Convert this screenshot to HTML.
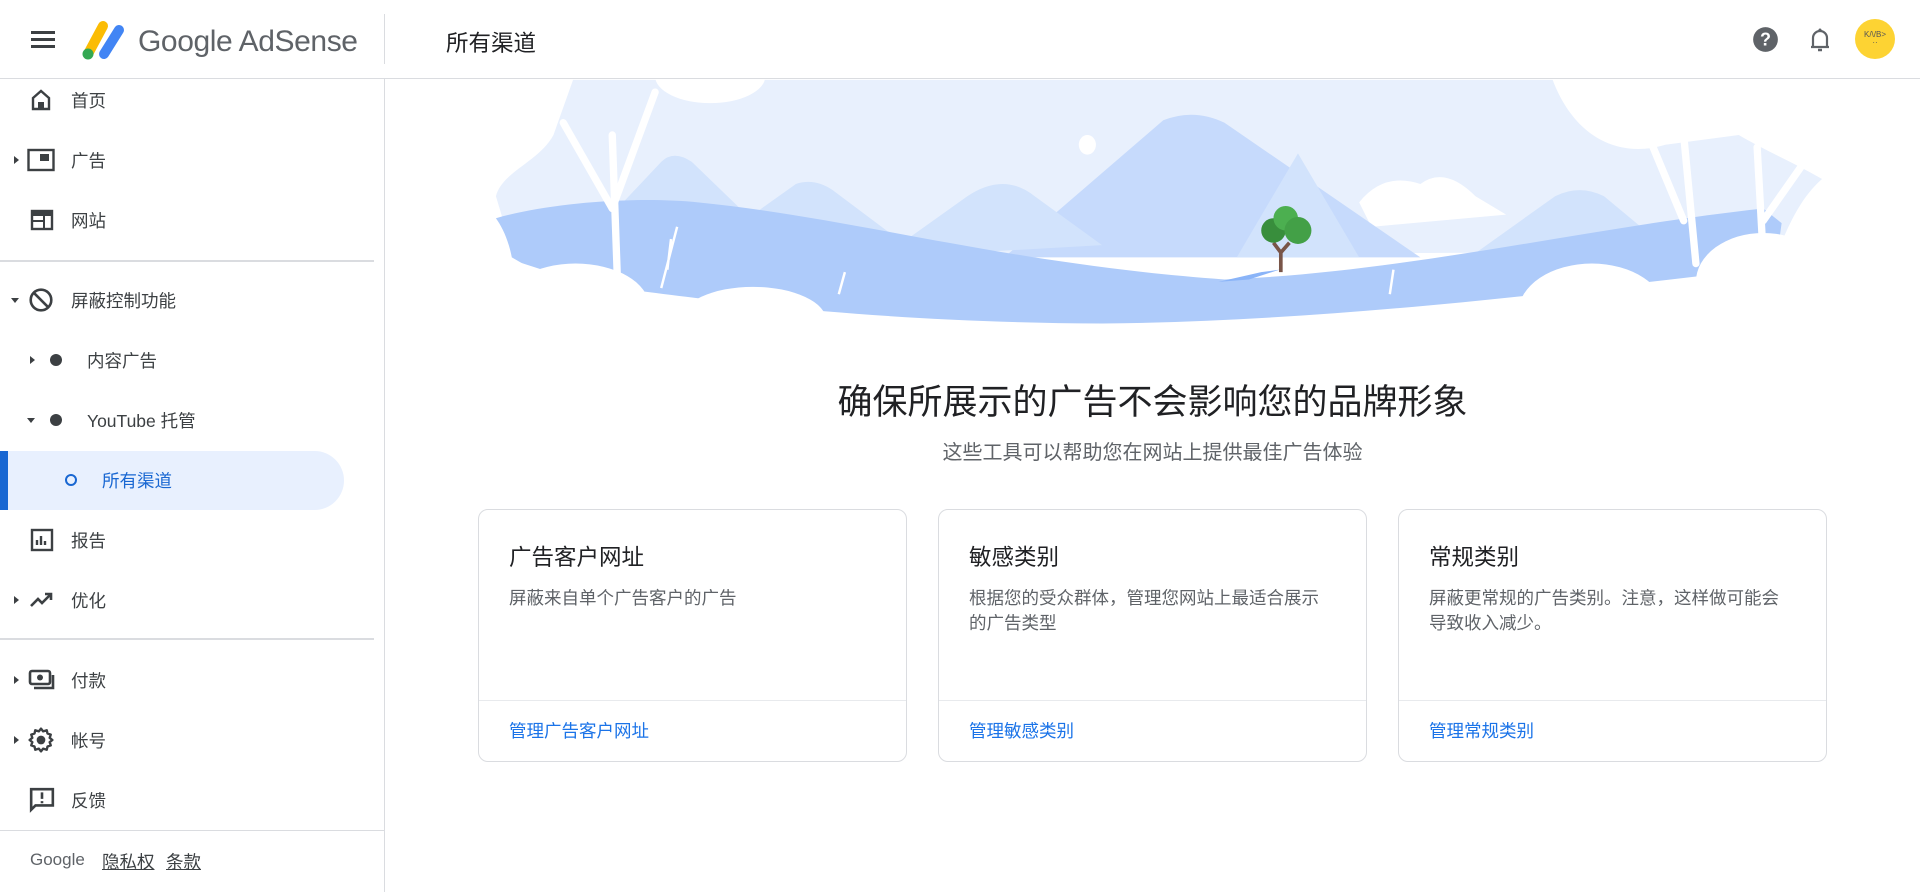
<!DOCTYPE html>
<html><head><meta charset="utf-8"><style>
*{margin:0;padding:0;box-sizing:border-box}
body{width:1920px;height:892px;overflow:hidden;background:#fff;font-family:"Liberation Sans","Noto Sans CJK SC",sans-serif;color:#3c4043;position:relative}
.hdr{position:absolute;left:0;top:0;width:1920px;height:79px;border-bottom:1px solid #dadce0;background:#fff}
.vline{position:absolute;left:384px;top:14px;width:1px;height:50px;background:#dadce0}
.side{position:absolute;left:384px;top:79px;width:1px;height:813px;background:#dadce0}
.item{position:absolute;left:0;height:40px;font-size:17.5px;color:#3c4043;display:flex;align-items:center}
.item .t{position:absolute;left:71px;white-space:nowrap}
.arr{position:absolute;width:0;height:0}
.arr.r{border-top:4px solid transparent;border-bottom:4px solid transparent;border-left:5px solid #3c4043}
.arr.d{border-left:4px solid transparent;border-right:4px solid transparent;border-top:5px solid #3c4043}
.hr{position:absolute;left:0;height:2px;background:#dadce0}
.card{position:absolute;top:509px;width:429px;height:253px;border:1px solid #dadce0;border-radius:10px;background:#fff}
.card h3{position:absolute;left:30px;top:30px;font-size:22.5px;font-weight:normal;color:#202124}
.card p{position:absolute;left:30px;top:76px;font-size:17.5px;line-height:24.5px;color:#5f6368}
.card .dv{position:absolute;left:0;right:0;top:190px;height:1px;background:#e8eaed}
.card a{position:absolute;left:30px;top:208px;font-size:17.5px;color:#1a73e8;text-decoration:none}
</style></head><body>
<svg style="position:absolute;left:0;top:0" width="1920" height="892" viewBox="0 0 1568 728">
<path d="M405,160 C410,140 440,132 452,110 L468,65 L1268,65 C1285,110 1320,130 1360,118 L1420,110 C1440,122 1470,135 1488,146 C1472,160 1462,180 1452,205 L420,210 Z" fill="#e8f0fd"/>
<ellipse cx="580" cy="62" rx="45" ry="22" fill="#fff"/>
<ellipse cx="888" cy="118" rx="7" ry="8" fill="#fff"/>
<path d="M490,185 L540,132 Q550,122 565,132 L620,185 Z" fill="#d2e3fc"/>
<path d="M580,200 L650,150 Q665,145 680,155 L740,200 Z" fill="#d2e3fc"/>
<path d="M1110,165 Q1130,140 1160,150 Q1180,135 1205,160 L1230,175 L1120,185 Z" fill="#fff"/>
<path d="M820,210 L950,98 Q975,88 1000,100 L1160,210 Z" fill="#c6dafc"/>
<path d="M720,210 L790,160 Q820,140 845,160 L900,200 Z" fill="#d2e3fc"/>
<path d="M1010,210 L1060,125 L1110,210 Z" fill="#d2e3fc"/>
<path d="M1200,210 L1270,160 Q1290,150 1310,160 L1370,210 Z" fill="#d2e3fc"/>
<path d="M405,178 C450,165 520,160 570,165 C700,178 820,215 1000,228 C1150,222 1300,185 1440,170 L1455,182 L1450,218 C1300,235 1100,262 900,264 C700,263 560,242 480,232 L418,212 C410,200 408,190 405,178 Z" fill="#aecbfa"/>
<path d="M418,210 C415,195 410,185 405,178 L405,240 L470,240 Z" fill="#fff"/>
<ellipse cx="470" cy="250" rx="60" ry="35" fill="#fff"/>
<ellipse cx="615" cy="262" rx="60" ry="28" fill="#fff"/>
<ellipse cx="1300" cy="255" rx="60" ry="40" fill="#fff"/>
<ellipse cx="1440" cy="230" rx="55" ry="40" fill="#fff"/>
<g stroke="#fff" stroke-width="6" stroke-linecap="round">
<line x1="505" y1="250" x2="500" y2="110"/><line x1="500" y1="170" x2="535" y2="75"/><line x1="500" y1="170" x2="460" y2="100"/>
<line x1="1385" y1="215" x2="1375" y2="110"/><line x1="1440" y1="210" x2="1435" y2="120"/><line x1="1440" y1="180" x2="1475" y2="130"/><line x1="1375" y1="180" x2="1350" y2="120"/>
</g>
<g stroke="#fff" stroke-width="2" fill="none"><path d="M540,235 L553,185 M545,220 L548,195"/><path d="M685,240 L690,222"/><path d="M1135,240 L1138,220"/></g>
<path d="M995,230 L1030,222 L1045,220 L1020,228 Z" fill="#8ab4f8"/>
<path d="M1046,222 L1046,206 L1040,198 M1046,206 L1053,198" stroke="#795548" stroke-width="3" fill="none"/>
<circle cx="1040" cy="188" r="10" fill="#388e3c"/><circle cx="1050" cy="178" r="10" fill="#4caf50"/><circle cx="1060" cy="188" r="11" fill="#43a047"/>
</svg>
<div class="hdr">
<div style="position:absolute;left:31px;top:31px;width:24px;height:3px;background:#3c4043;box-shadow:0 7px 0 #3c4043,0 14px 0 #3c4043"></div>
<svg style="position:absolute;left:80px;top:18px" width="48" height="44" viewBox="0 0 48 44"><line x1="8" y1="36" x2="23" y2="8" stroke="#fbbc04" stroke-width="10" stroke-linecap="round"/><line x1="24" y1="36" x2="39" y2="12" stroke="#4285f4" stroke-width="10" stroke-linecap="round"/><circle cx="8" cy="36" r="5.5" fill="#34a853"/></svg>
<div style="position:absolute;left:138px;top:25px;font-size:30px;color:#5f6368;letter-spacing:-0.4px">Google AdSense</div>
<div class="vline"></div>
<div style="position:absolute;left:446px;top:26px;font-size:22.5px;color:#202124">所有渠道</div>
<svg style="position:absolute;left:1752px;top:26px" width="27" height="27" viewBox="0 0 24 24"><circle cx="12" cy="12" r="11" fill="#5f6368"/><text x="12" y="17.5" font-size="16" font-weight="bold" text-anchor="middle" fill="#fff" font-family="Liberation Sans">?</text></svg>
<svg style="position:absolute;left:1808px;top:26px" width="24" height="28" viewBox="0 0 24 28"><path d="M5,21 L5,12 A7,7 0 0 1 19,12 L19,21 Z M3,21 L21,21" stroke="#5f6368" stroke-width="2.2" fill="none"/><path d="M10,24 L14,24" stroke="#5f6368" stroke-width="2.5"/><circle cx="12" cy="4" r="1.5" fill="#5f6368"/></svg>
<div style="position:absolute;left:1855px;top:19px;width:40px;height:40px;border-radius:50%;background:#fdd333;font-size:8px;color:#555;text-align:center;padding-top:12px;line-height:8px">K/\/B&gt;<br>··</div>
</div>
<div class="side"></div>
<div class="item" style="top:80px"><svg style="position:absolute;left:29px" width="24" height="24" viewBox="0 0 24 24"><path d="M4,21 L4,10 L12,3 L20,10 L20,21 Z" fill="none" stroke="#3c4043" stroke-width="2.4"/><rect x="9" y="14" width="6" height="7" fill="#3c4043"/></svg><span class="t">首页</span></div>
<div class="item" style="top:140px"><span class="arr r" style="left:14px"></span><svg style="position:absolute;left:27px" width="28" height="24" viewBox="0 0 28 24"><rect x="1.5" y="2" width="25" height="20" fill="none" stroke="#3c4043" stroke-width="2.4"/><rect x="13" y="6" width="9" height="7" fill="#3c4043"/></svg><span class="t">广告</span></div>
<div class="item" style="top:200px"><svg style="position:absolute;left:30px" width="24" height="24" viewBox="0 0 24 24"><rect x="2" y="3" width="20" height="18" fill="none" stroke="#3c4043" stroke-width="2.4"/><rect x="2" y="3" width="20" height="5" fill="#3c4043"/><path d="M2,13 H14 M14,8 V21" stroke="#3c4043" stroke-width="2"/></svg><span class="t">网站</span></div>
<div class="hr" style="top:260px;width:374px"></div>
<div class="item" style="top:280px"><span class="arr d" style="left:11px"></span><svg style="position:absolute;left:28px" width="26" height="26" viewBox="0 0 24 24"><circle cx="12" cy="12" r="9.5" fill="none" stroke="#3c4043" stroke-width="2.4"/><line x1="5.5" y1="5.5" x2="18.5" y2="18.5" stroke="#3c4043" stroke-width="2.4"/></svg><span class="t">屏蔽控制功能</span></div>
<div class="item" style="top:340px"><span class="arr r" style="left:30px"></span><span style="position:absolute;left:50px;width:12px;height:12px;border-radius:50%;background:#3c4043"></span><span class="t" style="left:87px">内容广告</span></div>
<div class="item" style="top:400px"><span class="arr d" style="left:27px"></span><span style="position:absolute;left:50px;width:12px;height:12px;border-radius:50%;background:#3c4043"></span><span class="t" style="left:87px">YouTube 托管</span></div>
<div style="position:absolute;left:0;top:451px;width:344px;height:59px;background:#e8f0fe;border-radius:0 30px 30px 0"></div>
<div style="position:absolute;left:0;top:451px;width:8px;height:59px;background:#1967d2"></div>
<div class="item" style="top:460px"><span style="position:absolute;left:65px;width:12px;height:12px;border-radius:50%;border:2.5px solid #1967d2"></span><span class="t" style="left:102px;color:#1967d2">所有渠道</span></div>
<div class="item" style="top:520px"><svg style="position:absolute;left:30px" width="24" height="24" viewBox="0 0 24 24"><rect x="2" y="2" width="20" height="20" fill="none" stroke="#3c4043" stroke-width="2.4"/><path d="M7,17 V12 M11,17 V8 M15,17 V13" stroke="#3c4043" stroke-width="2.4"/></svg><span class="t">报告</span></div>
<div class="item" style="top:580px"><span class="arr r" style="left:14px"></span><svg style="position:absolute;left:29px" width="26" height="20" viewBox="0 0 26 20"><path d="M2,16 L9,9 L13,13 L22,4 M16,4 H22 V10" fill="none" stroke="#3c4043" stroke-width="2.6"/></svg><span class="t">优化</span></div>
<div class="hr" style="top:638px;width:374px"></div>
<div class="item" style="top:660px"><span class="arr r" style="left:14px"></span><svg style="position:absolute;left:28px" width="28" height="22" viewBox="0 0 28 22"><rect x="2" y="2" width="20" height="13" rx="2" fill="none" stroke="#3c4043" stroke-width="2.6"/><circle cx="12" cy="8.5" r="3" fill="#3c4043"/><path d="M25,6 V19 H6" fill="none" stroke="#3c4043" stroke-width="2.6"/></svg><span class="t">付款</span></div>
<div class="item" style="top:720px"><span class="arr r" style="left:14px"></span><svg style="position:absolute;left:28px" width="26" height="26" viewBox="0 0 24 24"><path d="M12,1.5 L14,4 L17.3,3 L18,6 L21,7 L20,10 L22.5,12 L20,14 L21,17 L18,18 L17.3,21 L14,20 L12,22.5 L10,20 L6.7,21 L6,18 L3,17 L4,14 L1.5,12 L4,10 L3,7 L6,6 L6.7,3 L10,4 Z" fill="none" stroke="#3c4043" stroke-width="2.2" stroke-linejoin="round"/><circle cx="12" cy="12" r="4" fill="#3c4043"/></svg><span class="t">帐号</span></div>
<div class="item" style="top:780px"><svg style="position:absolute;left:29px" width="26" height="26" viewBox="0 0 24 24"><path d="M2,2 H22 V17 H6 L2,21 Z" fill="none" stroke="#3c4043" stroke-width="2.4"/><path d="M12,5 V11 M12,13 V15" stroke="#3c4043" stroke-width="2.4"/></svg><span class="t">反馈</span></div>
<div class="hr" style="top:830px;width:384px;height:1px"></div>
<div style="position:absolute;left:30px;top:850px;font-size:17px;color:#5f6368">Google</div>
<div style="position:absolute;left:102px;top:849px;font-size:17.5px;color:#3c4043;text-decoration:underline">隐私权</div>
<div style="position:absolute;left:166px;top:849px;font-size:17.5px;color:#3c4043;text-decoration:underline">条款</div>
<div style="position:absolute;left:385px;width:1535px;top:374px;text-align:center;font-size:35px;color:#202124">确保所展示的广告不会影响您的品牌形象</div>
<div style="position:absolute;left:385px;width:1535px;top:436px;text-align:center;font-size:20px;color:#5f6368">这些工具可以帮助您在网站上提供最佳广告体验</div>
<div class="card" style="left:478px"><h3>广告客户网址</h3><p>屏蔽来自单个广告客户的广告</p><div class="dv"></div><a>管理广告客户网址</a></div>
<div class="card" style="left:938px"><h3>敏感类别</h3><p>根据您的受众群体，管理您网站上最适合展示<br>的广告类型</p><div class="dv"></div><a>管理敏感类别</a></div>
<div class="card" style="left:1398px"><h3>常规类别</h3><p>屏蔽更常规的广告类别。注意，这样做可能会<br>导致收入减少。</p><div class="dv"></div><a>管理常规类别</a></div>
</body></html>
